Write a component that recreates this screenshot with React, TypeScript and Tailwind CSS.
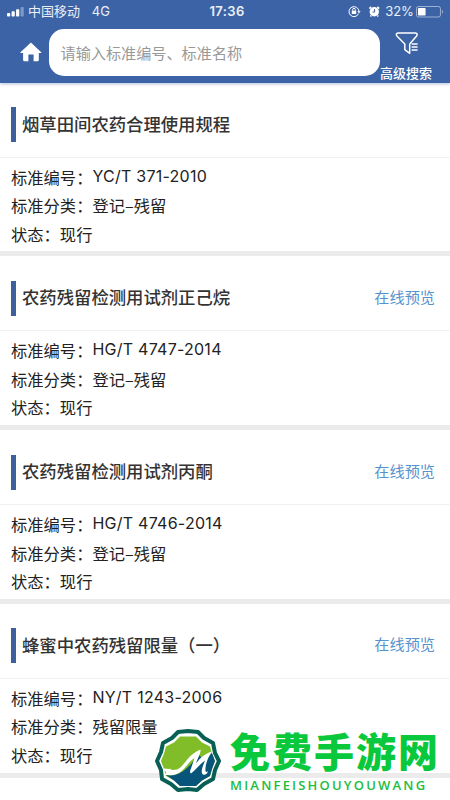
type Standard = {
  title: string;
  code: string;
  category: string;
  preview: boolean;
};

const standards: Standard[] = [
  {
    title: "烟草田间农药合理使用规程",
    code: "YC/T 371-2010",
    category: "登记–残留",
    preview: false,
  },
  {
    title: "农药残留检测用试剂正己烷",
    code: "HG/T 4747-2014",
    category: "登记–残留",
    preview: true,
  },
  {
    title: "农药残留检测用试剂丙酮",
    code: "HG/T 4746-2014",
    category: "登记–残留",
    preview: true,
  },
  {
    title: "蜂蜜中农药残留限量（一）",
    code: "NY/T 1243-2006",
    category: "残留限量",
    preview: true,
  },
];

const StatusBar = () => (
  <div className="flex h-[23px] items-center pl-[7px] pr-[6px] text-[13px] leading-none text-white/90">
    <svg width="17" height="10" viewBox="0 0 17 10" fill="#fff">
      <rect x="0" y="6" width="3.2" height="3.6" rx="0.8" />
      <rect x="4.6" y="4.3" width="3.2" height="5.3" rx="0.8" />
      <rect x="9.1" y="2.3" width="3.2" height="7.3" rx="0.8" />
      <rect x="13.6" y="0" width="3.2" height="9.6" rx="0.8" opacity="0.35" />
    </svg>
    <span className="ml-[4px] w-[64px]">中国移动</span>
    <span className="w-[118px]">4G</span>
    <span className="w-[139px] text-[13px] font-semibold tracking-[0.35px]">17:36</span>
    <svg width="13" height="13" viewBox="0 0 13 13" fill="none" stroke="#fff" strokeWidth="1">
      <path d="M10.6 8.6A5 5 0 1 1 11 6.5" />
      <path d="M9.3 6.2h3.4L11 8.3z" fill="#fff" stroke="none" />
      <rect x="3.8" y="5.7" width="4.4" height="3.3" fill="#fff" stroke="none" />
      <path d="M4.7 5.8V4.6a1.3 1.3 0 0 1 2.6 0v1.2" />
    </svg>
    <svg className="ml-[7px]" width="13" height="13" viewBox="0 0 13 13">
      <circle cx="6.3" cy="6.8" r="4.7" fill="#fff" />
      <path d="M1.4 3.6 3.2 1.8M11.2 3.6 9.4 1.8M3.2 10.6l-.8 1M9.4 10.6l.8 1" stroke="#fff" strokeWidth="1.6" />
      <path d="M6.6 4v3.1H4.6" fill="none" stroke="#3b63a5" strokeWidth="1" />
    </svg>
    <span className="ml-[4px] w-[31px] text-[13px]">32%</span>
    <svg width="28" height="12" viewBox="0 0 28 12">
      <rect x="0.5" y="0.5" width="24" height="10.5" rx="2" fill="none" stroke="#fff" strokeOpacity="0.5" />
      <rect x="2" y="2" width="7.6" height="7.6" rx="0.8" fill="#fff" />
      <path d="M26 3.8c1.4.5 1.4 3.4 0 3.9z" fill="#fff" fillOpacity="0.5" />
    </svg>
  </div>
);

const SearchHeader = () => (
  <div className="flex h-[60px] pl-[20px]">
    <svg className="mt-[19px] shrink-0" width="22" height="20" viewBox="0 0 22 20" fill="#fff">
      <path d="M10.9.4 21.2 10.2c.3.4.1.7-.3.7h-2.1v7.2c0 .7-.4 1.1-1 1.1h-4.2v-6.6H8.4v6.6H4.2c-.7 0-1.1-.4-1.1-1.1v-7.2H.8c-.5 0-.6-.4-.3-.7z" />
    </svg>
    <div className="ml-[7px] mt-[6px] flex h-[47px] w-[331px] items-center rounded-[15px] bg-white pl-[11.5px] pt-[3px] text-[15.15px] text-[#999]">
      请输入标准编号、标准名称
    </div>
    <div className="flex w-[52px] flex-col items-center text-white">
      <svg className="ml-[2px] mt-[9px]" width="24" height="23" viewBox="0 0 24 23" fill="none" stroke="#fff" strokeWidth="1.5" strokeLinejoin="round">
        <path d="M14.7 12v9.3L9.8 17.7V12L2.1 4.2C.8 2.6 1.2 1 3 1h17.5c1.8 0 2.2 1.6.9 3.2L14.7 12" />
        <path d="M16.6 12h6M16.6 15h6M16.6 18h6" />
      </svg>
      <span className="mt-[9px] whitespace-nowrap text-[13px] font-medium leading-[18px]">高级搜索</span>
    </div>
  </div>
);

const StandardCard = ({ title, code, category, preview }: Standard) => (
  <li className="h-[173.8px] border-b-[5.5px] border-[#ebebeb]">
    <div className="flex h-[75px] items-center border-b border-[#f2f2f2] pl-[11px] pr-[15px] pt-[10px] font-['Noto_Sans_CJK_SC',sans-serif]">
      <div className="h-[35px] w-[5px] shrink-0 bg-[#3b609c]" />
      <h2 className="ml-[6px] flex-1 pb-[2px] text-[17.35px] font-medium leading-[24px] text-[#333]">{title}</h2>
      {preview && <a className="pb-[5px] text-[15.2px] leading-[22px] text-[#5493ce]">在线预览</a>}
    </div>
    <dl className="pl-[11px] pt-[5px] text-[16.3px] leading-[28.5px] text-[#222]">
      <div className="flex">
        <dt className="font-['Noto_Sans_CJK_SC',sans-serif]">标准编号：</dt>
        <dd className="-mt-px text-[16px] tracking-[0.25px]">{code}</dd>
      </div>
      <div className="flex">
        <dt className="font-['Noto_Sans_CJK_SC',sans-serif]">标准分类：</dt>
        <dd className="font-['Noto_Sans_CJK_SC',sans-serif]">{category}</dd>
      </div>
      <div className="flex">
        <dt className="font-['Noto_Sans_CJK_SC',sans-serif]">状态：</dt>
        <dd className="font-['Noto_Sans_CJK_SC',sans-serif]">现行</dd>
      </div>
    </dl>
  </li>
);

const SiteBadge = () => (
  <div className="absolute left-[154px] top-[728px] flex">
    <svg width="68" height="66" viewBox="0 0 68 66">
      <path
        d="M34 3 44 4 50 10 59 15 61 25 65 33 61 42 59 51 50 56 43 62 34 61 24 62 17 56 8 51 7 42 3 33 7 24 9 15 18 10 24 4z"
        fill="#fff"
        stroke="#085f55"
        strokeWidth="4"
        strokeLinejoin="round"
      />
      <path
        d="M26 8.5h16l6 6 8 4 2 7 3 7.5-3 8-2 7-8 4.5-6 5.5H26l-6-5.5-8-4.5-2-7-3-8 3-7.5 2-7 8-4z"
        fill="#80bd28"
      />
      <path d="M12 47c14 2 21-6 33-20l5 5 8-7 3 8-3 8-2 7-8 4.5-6 5.5H26l-6-5.5z" fill="#07557b" />
      {/* wave running into the letter M */}
      <path
        d="M9.500 41c2-1.500 4 1 6.500-.5 1 2 4 1.500 7 1C31 38 33 27 46.500 21.500c.5 4-3 9-4.500 14C46 30 51 25.500 58 23.500c-5 7-7 15-6.500 19.500.5 1.500 1.500 1 2.500 0-.5 3-3 4.500-5 3.500-3-2 0-9 2-14-5 3.500-9 9-14 13-1.500-1-1-3 0-5l3.500-10.500C34 34 31 42 24 45.500c-5 2.500-10 2-14 1 1.500-.5 2.500-1.500 2-2.500-.5-1-2-1-2.500-3z"
        fill="#fff"
      />
    </svg>
    <div className="ml-[8px]">
      <div className="whitespace-nowrap text-[40px] font-black leading-[50px] tracking-[2px] text-[#09c83c]">
        免费手游网
      </div>
      <div className="-mt-px whitespace-nowrap font-['Open_Sans','Noto_Sans',sans-serif] text-[13px] font-semibold leading-[16px] tracking-[2.2px] text-[#22bd3d]">
        MIANFEISHOUYOUWANG
      </div>
    </div>
  </div>
);

export default function App() {
  return (
    <div
      lang="zh-CN"
      className="relative h-[800px] w-[450px] overflow-hidden bg-white font-['Inter','Noto_Sans_CJK_SC',sans-serif]"
    >
      <header className="h-[82.6px] bg-[#3b63a5] shadow-[0_1px_3px_rgba(59,99,165,0.4)]">
        <StatusBar />
        <SearchHeader />
      </header>
      <ul>
        {standards.map((item) => (
          <StandardCard key={item.code} {...item} />
        ))}
      </ul>
      <SiteBadge />
    </div>
  );
}
